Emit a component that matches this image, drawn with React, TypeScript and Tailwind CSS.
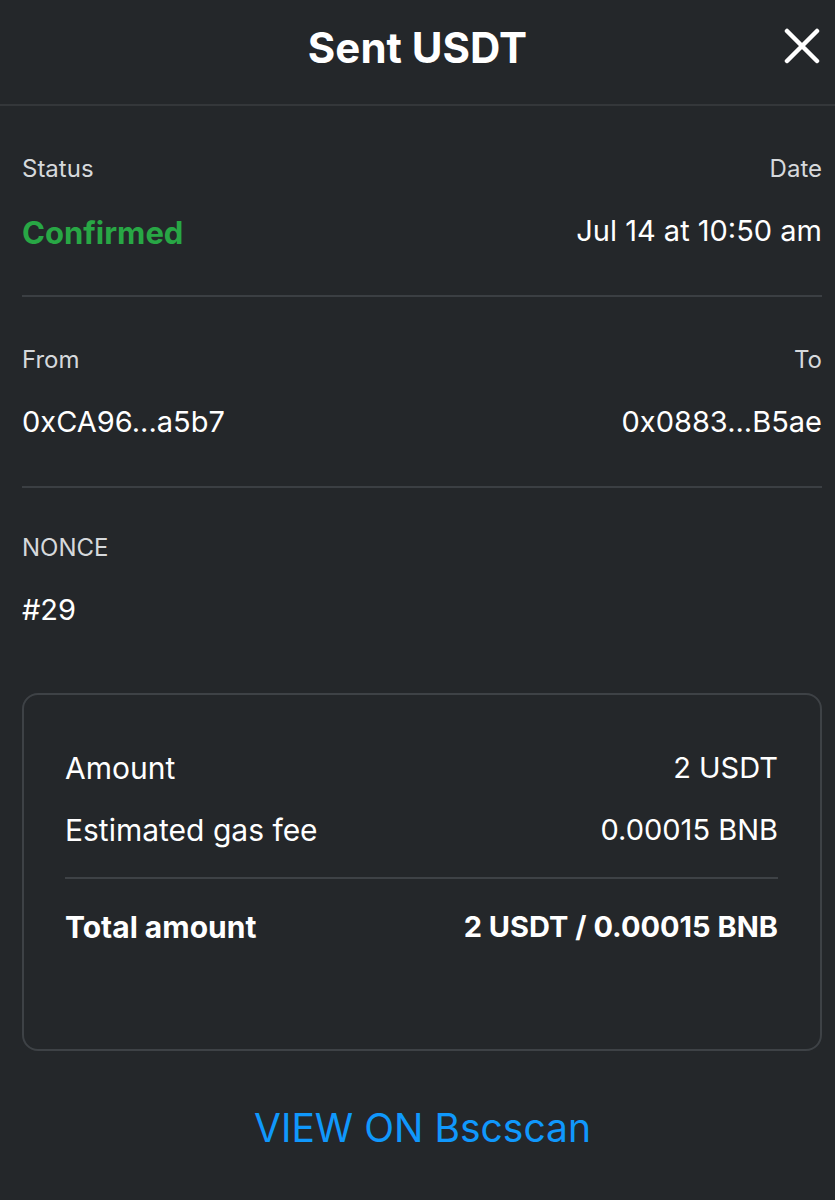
import React from 'react';

const font = { fontFamily: 'Inter, "Noto Sans", sans-serif' };

const CloseIcon = () => (
    <svg width="36" height="36" viewBox="0 0 36 36" fill="none">
        <path d="M3 3L33 33M33 3L3 33" stroke="#ffffff" strokeWidth="4.5" strokeLinecap="round" />
    </svg>
);

const InfoRow = ({ left, right, leftValue, rightValue, valueClass = '', divider = true, pad = 'pt-[47px] pb-[46px]' }: {
    left: string; right?: string; leftValue: string; rightValue?: string; valueClass?: string; divider?: boolean; pad?: string;
}) => (
    <div className={`ml-[22px] mr-[13px] ${pad} ${divider ? 'border-b-2 border-[#3b3f43]' : ''}`}>
        <div className="flex justify-between text-[24px] leading-[32px] text-[#d6d9dc]">
            <span>{left}</span>
            {right && <span>{right}</span>}
        </div>
        <div className="flex justify-between items-center mt-[28px] h-[36px] text-[29px] leading-[36px] text-white">
            <span className={valueClass}>{leftValue}</span>
            {rightValue && <span>{rightValue}</span>}
        </div>
    </div>
);

export default function App() {
    return (
        <div className="w-[835px] h-[1200px] bg-[#24272a] overflow-hidden" style={font}>
            {/* header */}
            <div className="relative h-[106px] flex items-center justify-center border-b-2 border-[#34373a]">
                <h1 className="text-[42px] font-bold text-white leading-none -mt-[8px]">Sent USDT</h1>
                <button className="absolute right-[15px] top-[28px]">
                    <CloseIcon />
                </button>
            </div>

            <InfoRow left="Status" right="Date" leftValue="Confirmed" rightValue="Jul 14 at 10:50 am" valueClass="font-bold text-[31px] text-[#28a745] translate-y-[2px]" />
            <InfoRow left="From" right="To" leftValue="0xCA96...a5b7" rightValue="0x0883...B5ae" />
            <InfoRow left="NONCE" leftValue="#29" divider={false} pad="pt-[44px] pb-[65px]" />

            {/* summary box */}
            <div className="ml-[22px] mr-[13px] h-[358px] rounded-[16px] border-2 border-[#3e4246] pl-[41px] pr-[42px] pt-[55px] text-white text-[29px]">
                <div className="flex justify-between leading-[36px]">
                    <span className="text-[30px]">Amount</span>
                    <span>2 USDT</span>
                </div>
                <div className="flex justify-between leading-[36px] mt-[26px]">
                    <span className="text-[30px]">Estimated gas fee</span>
                    <span>0.00015 BNB</span>
                </div>
                <div className="h-[2px] bg-[#3e4246] mt-[29px]" />
                <div className="flex justify-between leading-[36px] mt-[30px] font-bold">
                    <span className="text-[30px]">Total amount</span>
                    <span>2 USDT / 0.00015 BNB</span>
                </div>
            </div>

            <div className="flex justify-center mt-[54px]">
                <a className="text-[39px] leading-[46px] text-[#1098fc] translate-x-[5px]">VIEW ON Bscscan</a>
            </div>
        </div>
    );
}
